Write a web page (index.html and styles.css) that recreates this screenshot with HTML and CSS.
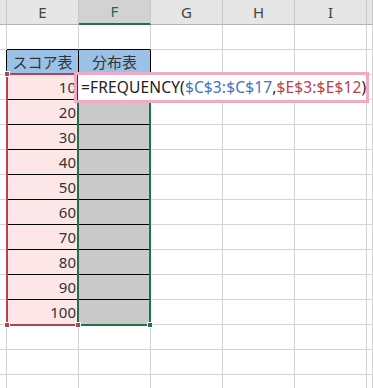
FILE: index.html
```html
<!DOCTYPE html>
<html lang="ja">
<head>
<meta charset="utf-8">
<link rel="stylesheet" href="styles.css">
</head>
<body>
<div class="sheet">
  <div class="row hdr">
    <div class="c c0"></div><div class="c">E</div><div class="c sel">F</div><div class="c">G</div><div class="c">H</div><div class="c">I</div><div class="c"></div>
  </div>
  <div class="row">
    <div class="c c0"></div><div class="c bkb"></div><div class="c bkb"></div><div class="c"></div><div class="c"></div><div class="c"></div><div class="c"></div>
  </div>
  <div class="row">
    <div class="c c0 bkr"></div><div class="c blue">スコア表</div><div class="c blue">分布表</div><div class="c"></div><div class="c"></div><div class="c"></div><div class="c"></div>
  </div>
  <div class="row"><div class="c c0 bkr"></div><div class="c pink num">10</div><div class="c gray"></div><div class="c"></div><div class="c"></div><div class="c"></div><div class="c"></div></div>
  <div class="row"><div class="c c0 bkr"></div><div class="c pink num">20</div><div class="c gray"></div><div class="c"></div><div class="c"></div><div class="c"></div><div class="c"></div></div>
  <div class="row"><div class="c c0 bkr"></div><div class="c pink num">30</div><div class="c gray"></div><div class="c"></div><div class="c"></div><div class="c"></div><div class="c"></div></div>
  <div class="row"><div class="c c0 bkr"></div><div class="c pink num">40</div><div class="c gray"></div><div class="c"></div><div class="c"></div><div class="c"></div><div class="c"></div></div>
  <div class="row"><div class="c c0 bkr"></div><div class="c pink num">50</div><div class="c gray"></div><div class="c"></div><div class="c"></div><div class="c"></div><div class="c"></div></div>
  <div class="row"><div class="c c0 bkr"></div><div class="c pink num">60</div><div class="c gray"></div><div class="c"></div><div class="c"></div><div class="c"></div><div class="c"></div></div>
  <div class="row"><div class="c c0 bkr"></div><div class="c pink num">70</div><div class="c gray"></div><div class="c"></div><div class="c"></div><div class="c"></div><div class="c"></div></div>
  <div class="row"><div class="c c0 bkr"></div><div class="c pink num">80</div><div class="c gray"></div><div class="c"></div><div class="c"></div><div class="c"></div><div class="c"></div></div>
  <div class="row"><div class="c c0 bkr"></div><div class="c pink num">90</div><div class="c gray"></div><div class="c"></div><div class="c"></div><div class="c"></div><div class="c"></div></div>
  <div class="row"><div class="c c0 bkr"></div><div class="c pink num">100</div><div class="c gray"></div><div class="c"></div><div class="c"></div><div class="c"></div><div class="c"></div></div>
  <div class="row"><div class="c c0"></div><div class="c"></div><div class="c"></div><div class="c"></div><div class="c"></div><div class="c"></div><div class="c"></div></div>
  <div class="row"><div class="c c0"></div><div class="c"></div><div class="c"></div><div class="c"></div><div class="c"></div><div class="c"></div><div class="c"></div></div>
  <div class="row"><div class="c c0"></div><div class="c"></div><div class="c"></div><div class="c"></div><div class="c"></div><div class="c"></div><div class="c"></div></div>

  <div class="range-red"></div>
  <div class="range-green"></div>
  <div class="hdl red h-tl"></div>
  <div class="hdl red h-bl"></div>
  <div class="hdl red h-br"></div>
  <div class="hdl green h-fill"></div>

  <div class="editor">
    <div class="edit-inner"><span>=FREQUENCY(</span><span class="ref-blue">$C$3:$C$17</span><span>,</span><span class="ref-red">$E$3:$E$12</span><span>)</span></div>
  </div>
</div>
</body>
</html>
```

FILE: styles.css
```css
* { box-sizing: border-box; }
html, body { margin: 0; padding: 0; background: #fff; }
body {
  font-family: "Noto Sans CJK JP", "Noto Sans", sans-serif;
  font-size: 15px;
  color: #333;
  width: 373px;
  height: 388px;
  overflow: hidden;
}
.sheet { position: relative; width: 373px; height: 388px; overflow: hidden; }
.row {
  display: grid;
  grid-template-columns: 7px repeat(5, 72px) 1fr;
  height: 25px;
}
.c {
  border-right: 1px solid #d4d4d4;
  border-bottom: 1px solid #d4d4d4;
  line-height: 24px;
  white-space: nowrap;
  overflow: hidden;
}
.hdr .c {
  background: #e6e6e6;
  border-right-color: #c8c8c8;
  border-bottom-color: #b4b4b4;
  text-align: center;
  color: #444;
  font-family: "Noto Sans", sans-serif;
  font-size: 15px;
}
.hdr .sel {
  background: #d2d2d2;
  color: #1d6b3e;
  border-bottom: 2px solid #217346;
  line-height: 23px;
}
.bkb { border-bottom-color: #000; }
.bkr { border-right-color: #000; }
.blue {
  background: #9bc2e6;
  border-right-color: #000;
  border-bottom-color: #000;
  text-align: center;
  color: #333;
}
.pink {
  background: #fce6e7;
  border-right-color: #000;
  border-bottom-color: #000;
}
.gray {
  background: #c9c9c9;
  border-right-color: #000;
  border-bottom-color: #000;
}
.num {
  text-align: right;
  padding-right: 2px;
  font-family: "Noto Sans", sans-serif;
}
.range-red {
  position: absolute;
  left: 6px; top: 73px;
  width: 73px; height: 253px;
  border: 2px solid #b7424f;
}
.range-green {
  position: absolute;
  left: 77px; top: 99px;
  width: 74px; height: 227px;
  border: 2px solid #217346;
}
.hdl { position: absolute; width: 6px; height: 6px; border: 1px solid #fff; }
.hdl.red { background: #b7424f; }
.hdl.green { background: #217346; }
.h-tl { left: 4px; top: 71px; }
.h-bl { left: 4px; top: 322px; }
.h-br { left: 75px; top: 322px; }
.h-fill { left: 147px; top: 322px; }
.editor {
  position: absolute;
  left: 74px; top: 72px;
  width: 295px; height: 31px;
  border: 3px solid #f2a9c3;
  background: #fff;
}
.edit-inner {
  height: 100%;
  border-left: 1px solid #333;
  padding-left: 3px;
  line-height: 24px;
  color: #222;
  font-family: "Noto Sans", sans-serif;
  font-size: 15.5px;
  letter-spacing: 0.15px;
  white-space: nowrap;
}
.ref-blue { color: #4472c4; }
.ref-red { color: #b7424f; }
```
